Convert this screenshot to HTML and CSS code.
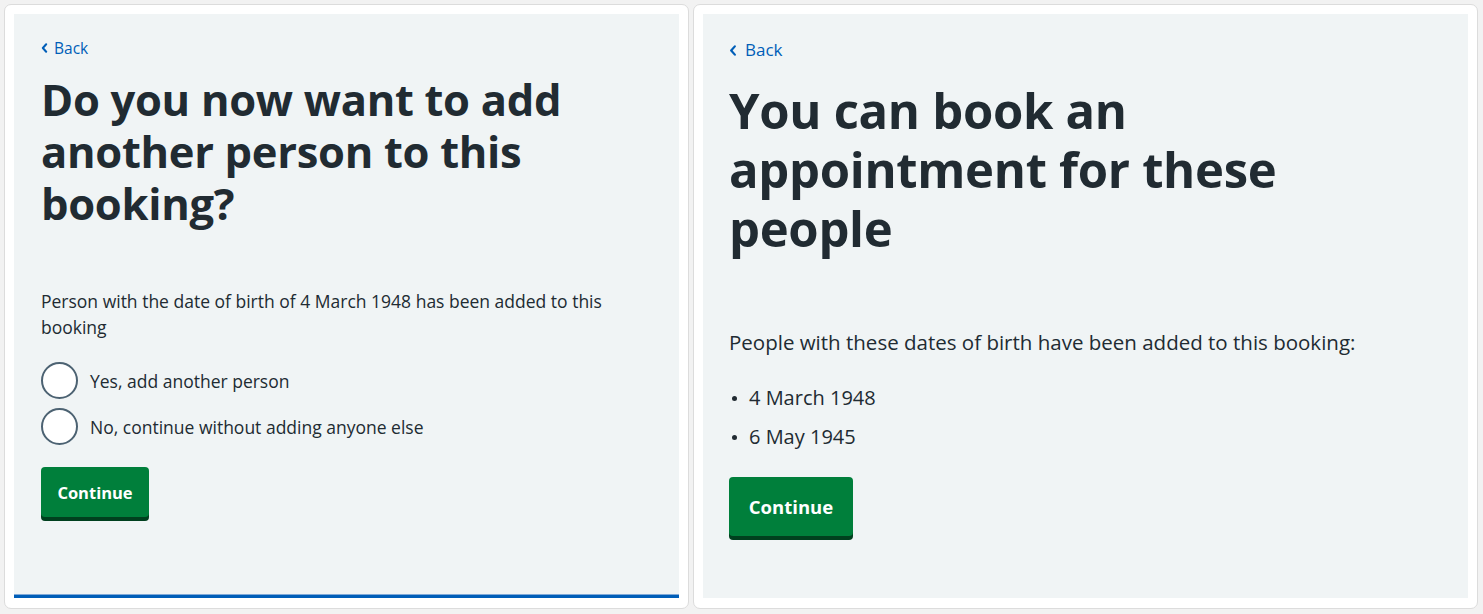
FILE: index.html
```html
<!DOCTYPE html>
<html lang="en">
<head>
<meta charset="utf-8">
<title>Booking</title>
<link rel="stylesheet" href="styles.css">
</head>
<body>
<div class="canvas">
  <section class="frame frame-left">
    <div class="screen screen-left">
      <a class="back" href="#"><svg class="chev" viewBox="0 0 8 12" width="7" height="10"><path d="M6 1.5 L2 6 L6 10.5" fill="none" stroke="currentColor" stroke-width="2.4" stroke-linecap="round" stroke-linejoin="round"/></svg>Back</a>
      <h1 class="title">Do you now want to add another person to this booking?</h1>
      <p class="lead">Person with the date of birth of 4 March 1948 has been added to this booking</p>
      <div class="radios">
        <label class="radio"><span class="circle"></span><span>Yes, add another person</span></label>
        <label class="radio"><span class="circle"></span><span>No, continue without adding anyone else</span></label>
      </div>
      <button class="btn">Continue</button>
    </div>
  </section>
  <section class="frame frame-right">
    <div class="screen screen-right">
      <a class="back" href="#"><svg class="chev" viewBox="0 0 8 12" width="8" height="11"><path d="M6 1.5 L2 6 L6 10.5" fill="none" stroke="currentColor" stroke-width="2.4" stroke-linecap="round" stroke-linejoin="round"/></svg>Back</a>
      <h1 class="title">You can book an appointment for these people</h1>
      <p class="lead">People with these dates of birth have been added to this booking:</p>
      <ul class="dates">
        <li>4 March 1948</li>
        <li>6 May 1945</li>
      </ul>
      <button class="btn">Continue</button>
    </div>
  </section>
</div>
</body>
</html>
```
FILE: styles.css
```css
* { box-sizing: border-box; }
html, body { margin: 0; padding: 0; }
body {
  background: #f2f2f2;
  font-family: "Open Sans", "Noto Sans", sans-serif;
  color: #212b32;
}
.canvas {
  display: flex;
  gap: 4px;
  padding: 4px 5px 5px 4px;
  height: 614px;
}
.frame {
  background: #ffffff;
  border: 1px solid #dcdcdc;
  border-radius: 7px;
  padding: 9px 9px 10px 9px;
  display: flex;
}
.frame-left { width: 685px; }
.frame-right { width: 785px; padding-bottom: 10px; }
.screen {
  background: #f0f4f5;
  flex: 1;
  display: flex;
  flex-direction: column;
  align-items: flex-start;
}
.screen-left {
  padding: 24px 27px 0 27px;
  border-bottom: 3px solid #005eb8;
  box-shadow: inset 0 -1px 0 #7fa9d8;
}
.screen-right {
  padding: 25px 26px 0 26px;
}
.back {
  display: inline-flex;
  align-items: center;
  gap: 6px;
  color: #005eb8;
  text-decoration: none;
  font-size: 15.5px;
  line-height: 20px;
}
.title {
  margin: 0;
  font-weight: 700;
  letter-spacing: -0.3px;
}
.lead { margin: 0; }
.btn {
  font-family: inherit;
  font-weight: 700;
  color: #ffffff;
  background: #007f3b;
  border: 0;
  border-radius: 4px;
  box-shadow: 0 4px 0 #00401e;
  cursor: pointer;
}

/* left */
.screen-left .title {
  font-size: 43.5px;
  line-height: 52px;
  margin-top: 16px;
  max-width: 560px;
}
.screen-left .lead {
  font-size: 17.5px;
  line-height: 26px;
  margin-top: 58px;
  max-width: 580px;
}
.radios {
  display: flex;
  flex-direction: column;
  gap: 9px;
  margin-top: 22px;
}
.radio {
  display: flex;
  align-items: center;
  gap: 12px;
  font-size: 17.5px;
  line-height: 36px;
}
.circle {
  width: 37px;
  height: 37px;
  border: 2px solid #4c6272;
  border-radius: 50%;
  background: #ffffff;
}
.screen-left .btn {
  margin-top: 22px;
  width: 108px;
  height: 50px;
  font-size: 16.5px;
}

/* right */
.screen-right .back {
  font-size: 17px;
  line-height: 22px;
  gap: 8px;
}
.screen-right .title {
  font-size: 49px;
  line-height: 59px;
  margin-top: 20px;
  max-width: 600px;
}
.screen-right .lead {
  font-size: 20.5px;
  line-height: 30px;
  margin-top: 69px;
}
.dates {
  list-style: none;
  margin: 26px 0 0 0;
  padding: 0;
  display: flex;
  flex-direction: column;
  gap: 9px;
  font-size: 20px;
  line-height: 30px;
}
.dates li {
  display: flex;
  align-items: center;
  gap: 12px;
  padding-left: 3px;
}
.dates li::before {
  content: "";
  width: 5px;
  height: 5px;
  border-radius: 50%;
  background: #212b32;
}
.screen-right .btn {
  margin-top: 25px;
  width: 124px;
  height: 59px;
  font-size: 18.5px;
}
```
